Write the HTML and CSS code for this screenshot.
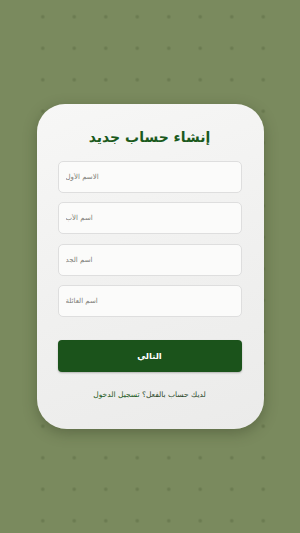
FILE: index.html
```html
<!DOCTYPE html>
<html lang="ar">
<head>
<meta charset="utf-8">
<title>إنشاء حساب جديد</title>
<link rel="stylesheet" href="styles.css">
</head>
<body>
<div class="dots"></div>
<main class="card">
  <h1 class="title">إنشاء حساب جديد</h1>
  <form class="form">
    <input class="field" type="text" placeholder="الاسم الأول">
    <input class="field" type="text" placeholder="اسم الأب">
    <input class="field" type="text" placeholder="اسم الجد">
    <input class="field" type="text" placeholder="اسم العائلة">
    <button class="next" type="button">التالي</button>
  </form>
  <p class="login" dir="rtl">لديك حساب بالفعل؟ <a class="login-link" href="#">تسجيل الدخول</a></p>
</main>
</body>
</html>
```

FILE: styles.css
```css
html, body {
  margin: 0;
  padding: 0;
}
body {
  width: 300px;
  height: 533px;
  background: #7a8a5e;
  font-family: "DejaVu Sans", sans-serif;
  display: flex;
  align-items: center;
  justify-content: center;
  position: relative;
  overflow: hidden;
}
.dots {
  position: absolute;
  left: 27px;
  top: 1.25px;
  width: 252px;
  height: 540px;
  background-image: radial-gradient(circle, rgba(60, 75, 40, 0.3) 0, rgba(60, 75, 40, 0.2) 1.3px, rgba(60, 75, 40, 0) 2.4px);
  background-size: 31.5px 31.5px;
  z-index: 0;
}
.card {
  position: relative;
  z-index: 1;
  width: 227px;
  box-sizing: border-box;
  padding: 18px 22px 26px 21px;
  border-radius: 28px 28px 30px 30px;
  background: linear-gradient(160deg, #f7f7f6 0%, #f0f0ef 55%, #ebebea 100%);
  box-shadow: 0 4px 14px rgba(40, 50, 25, 0.35);
}
.title {
  margin: 0 0 9px;
  height: 30px;
  line-height: 30px;
  text-align: center;
  font-size: 14px;
  font-weight: bold;
  color: #1b5a1d;
}
.form {
  display: flex;
  flex-direction: column;
  gap: 9.3px;
  margin: 0;
}
.field {
  display: block;
  width: 184px;
  height: 32px;
  box-sizing: border-box;
  margin: 0;
  padding: 0 7px;
  border: 1px solid #dedede;
  border-radius: 5px;
  background: #fbfbfa;
  font-family: "DejaVu Sans", sans-serif;
  font-size: 7px;
  color: #333;
  text-align: left;
}
.field::placeholder {
  color: #7d7d78;
}
.next {
  display: block;
  width: 184px;
  height: 32px;
  margin-top: 14px;
  border: none;
  border-radius: 4px;
  background: #1b531b;
  box-shadow: 0 1px 2px rgba(0, 0, 0, 0.25);
  color: #ffffff;
  font-family: "DejaVu Sans", sans-serif;
  font-size: 8.5px;
  font-weight: bold;
}
.login {
  margin: 15px 0 0;
  line-height: 16px;
  text-align: center;
  font-size: 7.5px;
  color: #2d4a2d;
}
.login-link {
  color: #1d5a22;
  text-decoration: none;
}
```
